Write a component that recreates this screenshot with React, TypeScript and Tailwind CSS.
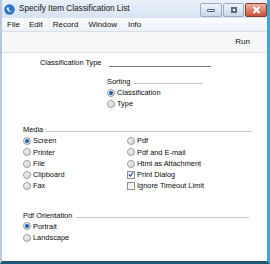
const font = { fontFamily: '"Liberation Sans", Arial, sans-serif' };

function Radio({ checked = false }: { checked?: boolean }) {
  return (
    <span className="w-[8px] h-[8px] rounded-full border border-[#9a9a9a] bg-gradient-to-br from-[#f6f6f6] to-[#d4d4d4] flex items-center justify-center shrink-0">
      {checked && <span className="w-[4px] h-[4px] rounded-full bg-[#1f5fb0]" />}
    </span>
  );
}

function Check({ checked = false }: { checked?: boolean }) {
  return (
    <span className="w-[8px] h-[8px] border border-[#8e8f8f] bg-gradient-to-br from-[#eeeeee] to-[#fbfbfb] flex items-center justify-center shrink-0">
      {checked && (
        <svg width="7" height="7" viewBox="0 0 7 7">
          <path d="M1 3.5 L2.8 5.3 L6 1.2" fill="none" stroke="#2a4f9a" strokeWidth="1.3" />
        </svg>
      )}
    </span>
  );
}

function Option({ label, checked, box }: { label: string; checked?: boolean; box?: boolean }) {
  return (
    <div className="h-[11.25px] flex items-center gap-[2px]">
      {box ? <Check checked={checked} /> : <Radio checked={checked} />}
      <span className="text-[7.4px] leading-none text-[#0a0a0a]">{label}</span>
    </div>
  );
}

function Caption({ label, line }: { label: string; line: string }) {
  return (
    <div className="flex items-center h-[10px]">
      <span className="text-[7.4px] leading-none text-[#0a0a0a]">{label}</span>
      <div className={`${line} h-px bg-[#c8c8c8] mt-[3px]`} />
    </div>
  );
}

export default function App() {
  return (
    <div className="w-[270px] h-[264px] flex flex-col bg-[#dfe8f4] border-l-2 border-l-[#b7c8dc] border-r-[3px] border-r-[#35a9d9] border-b-[3px] border-b-[#1c5b73] overflow-hidden" style={font}>
      {/* title bar */}
      <div className="h-[18px] flex items-start bg-gradient-to-b from-[#eaf1f9] to-[#d8e3f1] shrink-0">
        <svg width="11" height="11" viewBox="0 0 11 11" className="ml-[2px] mt-[4px]">
          <circle cx="5.5" cy="5.5" r="5.2" fill="#2c79c8" />
          <path d="M3 3.5 C2.5 6.5 5 8.6 8.4 7.4 C6 7.6 4.3 6.2 4.6 3.2 Z" fill="#ffffff" />
        </svg>
        <span className="ml-[4px] mt-[5px] text-[8.2px] leading-none text-[#111]">Specify Item Classification List</span>
        <div className="ml-auto flex mt-[3px] gap-[1px]">
          <div className="w-[22px] h-[14px] rounded-[2px] border border-[#9aabc0] bg-gradient-to-b from-[#f1f5fa] to-[#c9d6e7] flex items-center justify-center">
            <span className="w-[8px] h-[3px] bg-white border border-[#4a5b72] rounded-[1px]" />
          </div>
          <div className="w-[21px] h-[14px] rounded-[2px] border border-[#9aabc0] bg-gradient-to-b from-[#f1f5fa] to-[#c9d6e7] flex items-center justify-center">
            <span className="w-[6px] h-[6px] border-2 border-[#5a6b82] bg-white" />
          </div>
          <div className="w-[22px] h-[14px] rounded-[2px] border border-[#8c3a2c] bg-gradient-to-b from-[#eeb0a0] to-[#c9503a] flex items-center justify-center">
            <svg width="9" height="8" viewBox="0 0 9 8">
              <path d="M1.5 1 L7.5 7 M7.5 1 L1.5 7" stroke="#ffffff" strokeWidth="2" />
            </svg>
          </div>
        </div>
      </div>
      {/* menu bar */}
      <div className="h-[14px] flex items-center bg-gradient-to-b from-[#fafcfe] to-[#edf2f9] border-b border-b-[#d7dfea] text-[8px] text-[#111] shrink-0">
        <span className="ml-[5px]">File</span>
        <span className="ml-[9px]">Edit</span>
        <span className="ml-[10px]">Record</span>
        <span className="ml-[10px]">Window</span>
        <span className="ml-[11px]">Info</span>
      </div>
      {/* toolbar */}
      <div className="h-[21px] flex items-center justify-end pr-[17px] bg-[#f8f8f8] border-b border-b-[#e2e2e2] shrink-0">
        <span className="text-[8px] text-[#111]">Run</span>
      </div>
      {/* content */}
      <div className="flex-1 bg-white flex flex-col">
        <div className="flex items-start h-[10px] mt-[5px] ml-[38px]">
          <span className="text-[7.4px] leading-[10px] text-[#0a0a0a]">Classification Type</span>
          <div className="w-[102px] h-px bg-[#7a7a7a] ml-[8px] mt-[8px]" />
        </div>
        <div className="ml-[105px] mt-[9px] flex flex-col">
          <Caption label="Sorting" line="w-[69px] ml-[4px]" />
          <Option label="Classification" checked />
          <Option label="Type" />
        </div>
        <div className="ml-[21px] mt-[15px] flex flex-col">
          <Caption label="Media" line="w-[206px] ml-[3px]" />
          <div className="flex mt-[1px]">
            <div className="w-[104px] flex flex-col">
              <Option label="Screen" checked />
              <Option label="Printer" />
              <Option label="File" />
              <Option label="Clipboard" />
              <Option label="Fax" />
            </div>
            <div className="flex flex-col">
              <Option label="Pdf" />
              <Option label="Pdf and E-mail" />
              <Option label="Html as Attachment" />
              <Option label="Print Dialog" box checked />
              <Option label="Ignore Timeout Limit" box />
            </div>
          </div>
          <div className="mt-[19px]">
            <Caption label="Pdf Orientation" line="w-[173px] ml-[4px]" />
          </div>
          <Option label="Portrait" checked />
          <Option label="Landscape" />
        </div>
      </div>
    </div>
  );
}
